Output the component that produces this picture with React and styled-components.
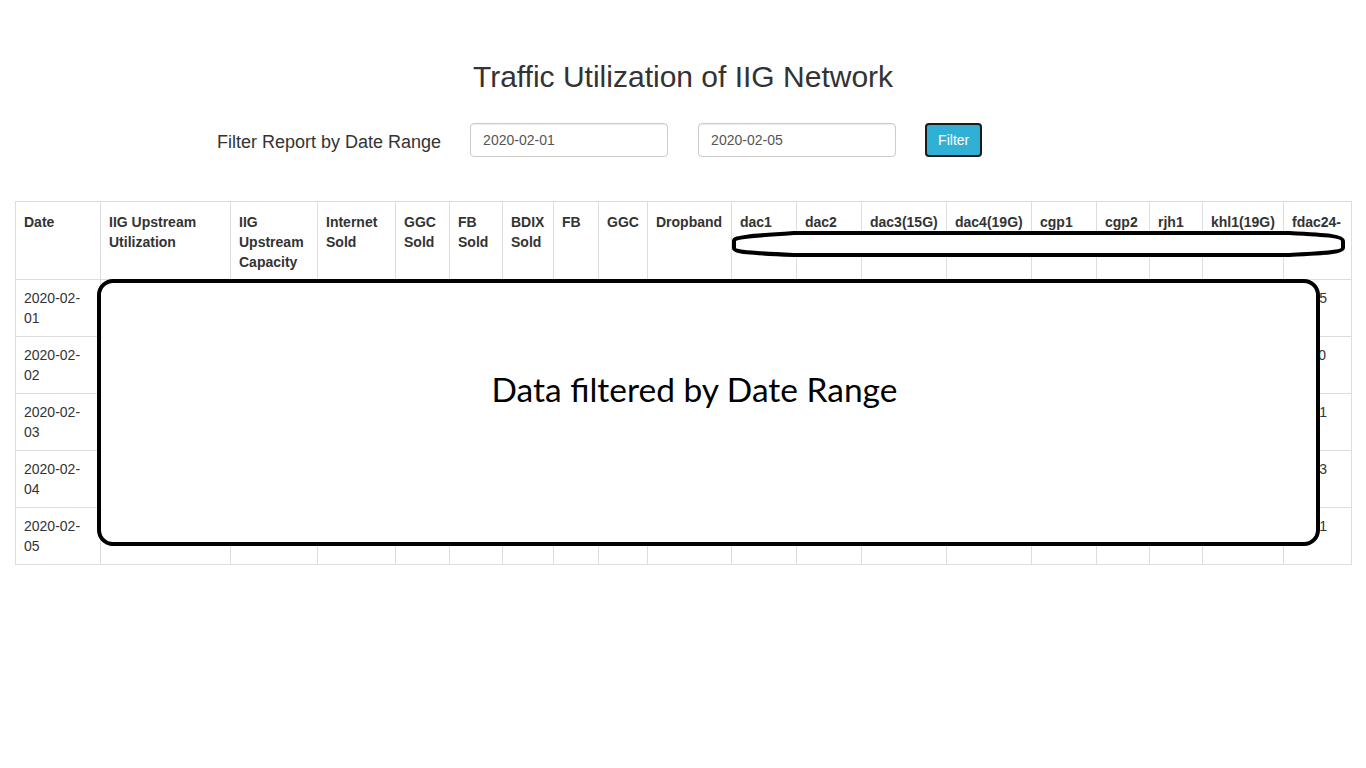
import React from 'react';
import styled, { createGlobalStyle } from 'styled-components';

const GlobalStyle = createGlobalStyle`
  * { box-sizing: border-box; }
  body {
    margin: 0;
    background: #fff;
    color: #333;
    font-family: "Liberation Sans", Arial, sans-serif;
    font-size: 14px;
    line-height: 1.42857;
  }
`;

const Page = styled.div`
  padding: 0 15px;
`;

const Title = styled.h2`
  margin: 60px 0 30px;
  text-align: center;
  font-size: 30px;
  font-weight: 400;
  line-height: 1.1;
  color: #333;
`;

const FilterRow = styled.form`
  display: flex;
  align-items: center;
  gap: 30px;
  padding-left: 202px;
  margin-bottom: 44px;
`;

const FilterLabel = styled.label`
  font-size: 18px;
  color: #333;
  margin-right: -1px;
  padding-top: 5px;
`;

const DateInput = styled.input`
  width: 198px;
  height: 34px;
  padding: 6px 12px;
  font-family: "Liberation Sans", Arial, sans-serif;
  font-size: 14px;
  color: #555;
  border: 1px solid #ccc;
  border-radius: 4px;
  box-shadow: inset 0 1px 1px rgba(0, 0, 0, 0.075);
`;

const FilterButton = styled.button`
  height: 34px;
  padding: 6px 11px;
  font-family: "Liberation Sans", Arial, sans-serif;
  font-size: 14px;
  color: #fff;
  background: #31b0d5;
  border: 2px solid #1a1a1a;
  border-radius: 4px;
  margin-left: -1px;
`;

const TableWrap = styled.div`
  position: relative;
`;

const Table = styled.table`
  width: 100%;
  table-layout: fixed;
  border-collapse: collapse;
  border: 1px solid #ddd;
`;

const HeadCell = styled.th`
  width: ${p => p.$w}px;
  padding: 10px 8px 6px;
  border: 1px solid #ddd;
  text-align: left;
  vertical-align: top;
  font-weight: 700;
  line-height: 20px;
  height: 78px;
`;

const Cell = styled.td`
  padding: 8px;
  border: 1px solid #ddd;
  vertical-align: top;
  line-height: 20px;
  height: 57px;
  overflow: hidden;
`;

const HighlightRing = styled.svg`
  position: absolute;
  left: 714px;
  top: 28px;
  width: 620px;
  height: 30px;
`;

const Callout = styled.div`
  position: absolute;
  left: 82px;
  top: 78px;
  width: 1223px;
  height: 267px;
  background: #fff;
  border: 4px solid #000;
  border-radius: 16px;
  display: flex;
  justify-content: center;
  padding: 88px 28px 0 0;
`;

const CalloutText = styled.div`
  font-family: Lato, "Open Sans", sans-serif;
  font-size: 33.5px;
  line-height: 36px;
  color: #000;
`;

const columns = [
  ['Date', 85],
  ['IIG Upstream Utilization', 130],
  ['IIG Upstream Capacity', 87],
  ['Internet Sold', 78],
  ['GGC Sold', 54],
  ['FB Sold', 53],
  ['BDIX Sold', 51],
  ['FB', 45],
  ['GGC', 49],
  ['Dropband', 84],
  ['dac1', 65],
  ['dac2', 65],
  ['dac3(15G)', 85],
  ['dac4(19G)', 85],
  ['cgp1', 65],
  ['cgp2', 53],
  ['rjh1', 53],
  ['khl1(19G)', 81],
  ['fdac24-', 68],
];

const rows = [
  ['2020-02-01', '12.35'],
  ['2020-02-02', '11.20'],
  ['2020-02-03', '10.91'],
  ['2020-02-04', '13.43'],
  ['2020-02-05', '12.01'],
];

export default function App() {
  return (
    <>
      <GlobalStyle />
      <Page>
        <Title>Traffic Utilization of IIG Network</Title>
        <FilterRow onSubmit={e => e.preventDefault()}>
          <FilterLabel>Filter Report by Date Range</FilterLabel>
          <DateInput type="text" defaultValue="2020-02-01" />
          <DateInput type="text" defaultValue="2020-02-05" />
          <FilterButton type="submit">Filter</FilterButton>
        </FilterRow>

        <TableWrap>
          <Table>
            <thead>
              <tr>
                {columns.map(([name, w]) => (
                  <HeadCell key={name} $w={w}>{name}</HeadCell>
                ))}
              </tr>
            </thead>
            <tbody>
              {rows.map(([date, last]) => (
                <tr key={date}>
                  <Cell>{date}</Cell>
                  {columns.slice(1, -1).map(([name]) => (
                    <Cell key={name} />
                  ))}
                  <Cell>{last}</Cell>
                </tr>
              ))}
            </tbody>
          </Table>

          <HighlightRing viewBox="0 0 620 30">
            <path
              d="M5 12 C5 8 20 7 65 4 L560 4 C600 6 614 7 614 12 L614 19 C614 23 600 24 560 26 L65 26 C20 24 5 23 5 19 Z"
              fill="#fff"
              stroke="#000"
              strokeWidth="4"
              strokeLinejoin="round"
            />
          </HighlightRing>

          <Callout>
            <CalloutText>Data filtered by Date Range</CalloutText>
          </Callout>
        </TableWrap>
      </Page>
    </>
  );
}
